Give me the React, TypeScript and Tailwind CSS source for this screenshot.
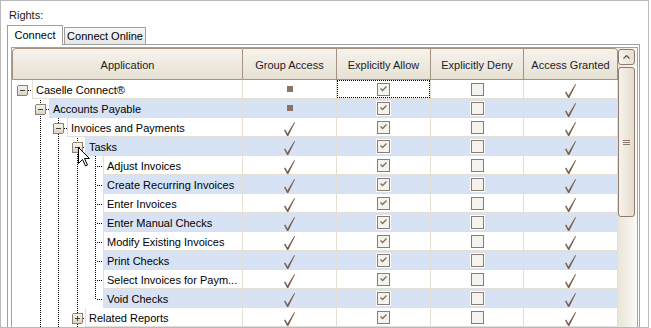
import React from "react";

type Row = {
  label: string;
  d: number;
  exp?: "minus" | "plus";
  sq?: boolean;
  last?: boolean;
  focus?: boolean;
  cursor?: boolean;
};

const rows: Row[] = [
  { label: "Caselle Connect®", d: 0, exp: "minus", sq: true, focus: true, last: true },
  { label: "Accounts Payable", d: 1, exp: "minus", sq: true },
  { label: "Invoices and Payments", d: 2, exp: "minus" },
  { label: "Tasks", d: 3, exp: "minus", cursor: true },
  { label: "Adjust Invoices", d: 4 },
  { label: "Create Recurring Invoices", d: 4 },
  { label: "Enter Invoices", d: 4 },
  { label: "Enter Manual Checks", d: 4 },
  { label: "Modify Existing Invoices", d: 4 },
  { label: "Print Checks", d: 4 },
  { label: "Select Invoices for Paym...", d: 4 },
  { label: "Void Checks", d: 4, last: true },
  { label: "Related Reports", d: 3, exp: "plus" },
];

// tree geometry, page x coords
const cx = (d: number) => Math.round(21.8 + 18.3 * d);
const labelStart = (d: number) => Math.floor(32 + 17.75 * d);

const Tick = () => (
  <svg width="11" height="14" viewBox="0 0 11 14" className="mt-[4px]">
    <path d="M0 8.2 L1.3 7.5 L3.4 11.6 L10.3 0 L11 0.4 L4.3 14 L3.1 14 Z" fill="#7a604f" />
  </svg>
);

const CheckBox = ({ checked }: { checked?: boolean }) => (
  <div className="w-[13px] h-[13px] border border-[#8d7b6d] bg-[#f5f3ee] shadow-[0_0_0_1px_#ffffff] flex items-center justify-center">
    {checked && (
      <svg width="7" height="6" viewBox="0 0 7 6">
        <polyline points="0.5,2.5 2.6,4.6 6.5,0.6" fill="none" stroke="#857161" strokeWidth="1.4" />
      </svg>
    )}
  </div>
);

const TreeLines = ({ row, idx }: { row: Row; idx: number }) => {
  const w = labelStart(row.d) - 12;
  const off = idx % 2 ? 1 : 0;
  const vx = (k: number) => cx(k) - 12 + 0.5;
  const own = vx(row.d);
  const ex = cx(row.d) - 12 - 5;
  return (
    <svg width={w} height="19" className="shrink-0" shapeRendering="crispEdges">
      {Array.from({ length: Math.max(row.d - 1, 0) }, (_, i) => i + 1).map((k) => (
        <line key={k} x1={vx(k)} x2={vx(k)} y1="0" y2="19" stroke="#000" strokeDasharray="1 1" strokeDashoffset={off} />
      ))}
      {row.d > 0 && (
        <line x1={own} x2={own} y1="0" y2={row.last ? 11 : 19} stroke="#000" strokeDasharray="1 1" strokeDashoffset={off} />
      )}
      <line x1={own + 1} x2={w} y1="10.5" y2="10.5" stroke="#000" strokeDasharray="1 1" />
      {row.exp && (
        <g>
          <defs>
            <linearGradient id="expg" x1="0" y1="0" x2="0" y2="1">
              <stop offset="0" stopColor="#f8f6f2" />
              <stop offset="1" stopColor="#d8d0c3" />
            </linearGradient>
          </defs>
          <rect x={ex + 0.5} y="5.5" width="10" height="10" rx="1.5" fill="url(#expg)" stroke="#8e8174" />
          <line x1={ex + 3} x2={ex + 8} y1="10.5" y2="10.5" stroke="#4c3f35" />
          {row.exp === "plus" && <line x1={ex + 5.5} x2={ex + 5.5} y1="8" y2="13" stroke="#4c3f35" />}
        </g>
      )}
    </svg>
  );
};

const Cursor = () => (
  <svg width="13" height="20" viewBox="0 0 13 20" className="absolute left-[66px] top-[10px] z-10">
    <path d="M0.5 0.5 L0.5 16.5 L4.5 12.5 L7.5 19 L9.5 18 L6.5 11.5 L11.5 11.5 Z" fill="#fff" stroke="#000" strokeLinejoin="miter" />
  </svg>
);

const GridRow = ({ row, idx }: { row: Row; idx: number }) => {
  const bg = idx % 2 ? "bg-[#d7e3f5]" : "bg-white";
  return (
    <div className="flex h-[19px]">
      <div className="relative flex w-[231px] shrink-0 bg-white">
        <TreeLines row={row} idx={idx} />
        <div className={`flex-1 min-w-0 border-l border-b border-r border-[#e4dfd4] pl-[3px] pt-px leading-[18px] whitespace-nowrap overflow-hidden text-black ${bg}`}>
          {row.label}
        </div>
        {row.cursor && <Cursor />}
      </div>
      <div className={`w-[94px] shrink-0 border-r border-b border-[#e4dfd4] flex justify-center ${bg} ${row.sq ? "items-center" : ""}`}>
        {row.sq ? <div className="w-[6px] h-[6px] bg-[#8b7463]" /> : <Tick />}
      </div>
      <div className={`w-[94px] shrink-0 border-r border-b border-[#e4dfd4] ${bg}`}>
        <div className={`h-full flex items-center justify-center ${row.focus ? "border border-dotted border-black" : ""}`}>
          <CheckBox checked />
        </div>
      </div>
      <div className={`w-[93px] shrink-0 border-r border-b border-[#e4dfd4] flex items-center justify-center ${bg}`}>
        <CheckBox />
      </div>
      <div className={`w-[94px] shrink-0 border-r border-b border-[#e4dfd4] flex justify-center ${bg}`}>
        <Tick />
      </div>
    </div>
  );
};

const headers = [
  { t: "Application", w: "w-[231px] border-l rounded-tl-[4px]" },
  { t: "Group Access", w: "w-[94px]" },
  { t: "Explicitly Allow", w: "w-[94px]" },
  { t: "Explicitly Deny", w: "w-[93px]" },
  { t: "Access Granted", w: "w-[94px] rounded-tr-[4px]" },
];

export default function App() {
  return (
    <div className="w-[651px] h-[328px] bg-white font-['Liberation_Sans',Arial,sans-serif] text-[11px] text-black">
      <div className="w-[649px] h-[328px] border border-[#b9b9b9] overflow-hidden pl-[6px] pt-[7px] flex flex-col">
        <div className="h-[14px] leading-[14px] ml-[2px] text-[#1a1a1a]">Rights:</div>
        <div className="flex items-end h-[20px] mt-[3px] -mb-px">
          <div className="relative z-10 h-[20px] w-[56px] border-l border-t border-r border-[#a0a0a0] bg-white flex items-center justify-center pb-[1px]">
            Connect
          </div>
          <div className="h-[17px] w-[82px] ml-px mb-px border-l border-t border-r border-[#a0a0a0] bg-gradient-to-b from-[#f7f7f7] to-[#e6e6e6] flex items-center justify-center pt-[1px]">
            Connect Online
          </div>
        </div>
        <div className="w-[633px] flex-1 border-l border-t border-r border-[#a0a0a0] pl-[3px] pt-[2px] pr-[1px]">
          <div className="w-[627px] h-[400px] border border-[#a9a199] flex">
            <div className="w-[606px] flex flex-col">
              <div className="flex h-[32px]">
                {headers.map((h) => (
                  <div
                    key={h.t}
                    className={`${h.w} shrink-0 border-t border-b border-r border-[#a39282] bg-gradient-to-b from-[#f6f3ec] to-[#e7e1d4] flex items-center justify-center pt-[2px] text-[#1c1c28]`}
                  >
                    {h.t}
                  </div>
                ))}
              </div>
              {rows.map((r, i) => (
                <GridRow key={r.label} row={r} idx={i} />
              ))}
            </div>
            <div className="w-[19px] pr-[2px] pt-px bg-gradient-to-r from-[#ebe5d9] to-[#fbfaf6] flex flex-col">
              <div className="h-[16px] rounded-[3px] border border-[#8f7b6c] bg-gradient-to-r from-[#f7f4ee] to-[#e6dfd1] flex items-center justify-center">
                <svg width="7" height="4" viewBox="0 0 7 4">
                  <polyline points="0.5,3.5 3.5,0.6 6.5,3.5" fill="none" stroke="#5d4b3e" strokeWidth="1.1" />
                </svg>
              </div>
              <div className="h-[150px] mt-[2px] rounded-[3px] border border-[#8f7b6c] bg-gradient-to-r from-[#f6f3ec] to-[#e5ddce] flex flex-col items-center justify-center gap-[1px]">
                <div className="w-[7px] h-px bg-[#8c7a6b]" />
                <div className="w-[7px] h-px bg-[#8c7a6b]" />
                <div className="w-[7px] h-px bg-[#8c7a6b]" />
              </div>
            </div>
          </div>
        </div>
      </div>
    </div>
  );
}
